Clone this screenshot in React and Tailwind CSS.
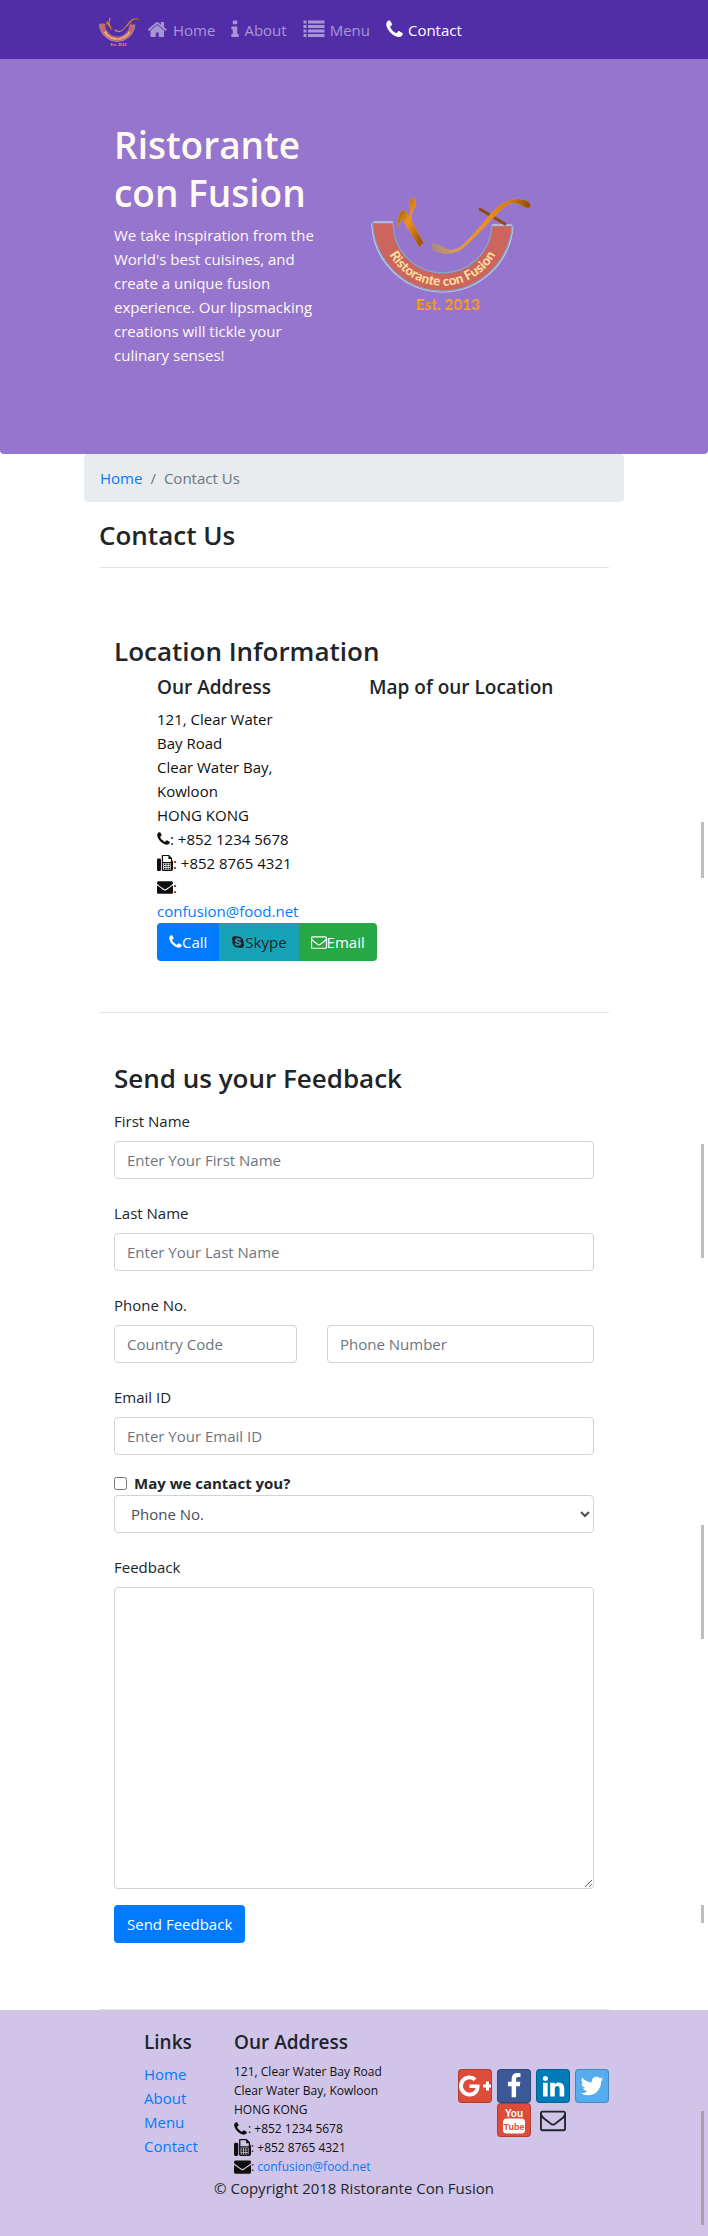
import { FaSkype } from "react-icons/fa";

const PATHS = {
  home: "M1408 992v480q0 26-19 45t-45 19h-384v-384h-256v384h-384q-26 0-45-19t-19-45v-480q0-1 .5-3t.5-3l575-474 575 474q1 2 1 6zm223-69l-62 74q-8 9-21 11h-3q-13 0-21-7l-692-577-692 577q-12 8-24 7-13-2-21-11l-62-74q-8-10-7-23.5t11-21.5l719-599q32-26 76-26t76 26l244 204v-195q0-14 9-23t23-9h192q14 0 23 9t9 23v408l219 182q10 8 11 21.5t-7 23.5z",
  info: "M1216 1344v128q0 26-19 45t-45 19h-512q-26 0-45-19t-19-45v-128q0-26 19-45t45-19h64v-384h-64q-26 0-45-19t-19-45v-128q0-26 19-45t45-19h384q26 0 45 19t19 45v576h64q26 0 45 19t19 45zm-128-1152v192q0 26-19 45t-45 19h-256q-26 0-45-19t-19-45v-192q0-26 19-45t45-19h256q26 0 45 19t19 45z",
  list: "M0 128h256v256h-256zM384 128h1408v256h-1408zM0 512h256v256h-256zM384 512h1408v256h-1408zM0 896h256v256h-256zM384 896h1408v256h-1408zM0 1280h256v256h-256zM384 1280h1408v256h-1408z",
  phone: "M1600 1240q0 27-10 70.5t-21 68.5q-21 50-122 106-94 51-186 51-27 0-52.5-3.5t-57.5-12.5-47.5-14.5-55.5-20.5-49-18q-98-35-175-83-128-79-264.5-215.5t-215.5-264.5q-48-77-83-175-3-9-18-49t-20.5-55.5-14.5-47.5-12.5-57.5-3.5-52.5q0-92 51-186 56-101 106-122 25-11 68.5-21t70.5-10q14 0 21 3 18 6 53 76 11 19 30 54t35 63.5 31 53.5q3 4 17.5 25t21.5 35.5 7 28.5q0 20-28.5 50t-62 55-62 53-28.5 46q0 9 5 22.5t8.5 20.5 14 24 11.5 19q76 137 174 235t235 174q2 1 19 11.5t24 14 20.5 8.5 22.5 5q18 0 46-28.5t53-62 55-62 50-28.5q14 0 28.5 7t35.5 21.5 25 17.5q25 15 53.5 31t63.5 35 54 30q70 35 76 53 3 7 3 21z",
  envelope: "M1792 710v794q0 66-47 113t-113 47h-1472q-66 0-113-47t-47-113v-794q44 49 101 87 362 246 497 345 57 42 92.5 65.5t94.5 48 110 24.5h2q51 0 110-24.5t94.5-48 92.5-65.5q170-123 498-345 57-39 100-87zm0-294q0 79-49 151t-122 123q-376 261-468 325-10 7-42.5 31t-54 38.5-52 32.5-57.5 27-50 9h-2q-23 0-50-9t-57.5-27-52-32.5-54-38.5-42.5-31q-91-64-262-182.5t-205-142.5q-62-42-117-115.5t-55-136.5q0-78 41.5-130t118.5-52h1472q65 0 112.5 47t47.5 113z",
  envelopeO: "M1664 1504v-768q-32 36-69 66-268 206-426 338-51 43-83 67t-86.5 48.5-102.5 24.5h-2q-48 0-102.5-24.5t-86.5-48.5-83-67q-158-132-426-338-37-30-69-66v768q0 13 9.5 22.5t22.5 9.5h1472q13 0 22.5-9.5t9.5-22.5zm0-1051v-24.5l-.5-13-3-12.5-5.5-9-9-7.5-14-2.5h-1472q-13 0-22.5 9.5t-9.5 22.5q0 168 147 284 193 152 401 317 6 5 35 29.5t46 37.5 44.5 31.5 50.5 27.5 43 9h2q20 0 43-9t50.5-27.5 44.5-31.5 46-37.5 35-29.5q208-165 401-317 54-43 100.5-115.5t46.5-131.5zm128-37v1088q0 66-47 113t-113 47h-1472q-66 0-113-47t-47-113v-1088q0-66 47-113t113-47h1472q66 0 113 47t47 113z",
  facebook: "M1343 12v264h-157q-86 0-116 36t-30 108v189h293l-39 296h-254v759h-306v-759h-255v-296h255v-218q0-186 104-288.5t277-102.5q147 0 228 12z",
  linkedin: "M477 625v991h-330v-991h330zm21-306q1 73-50.5 122t-135.5 49h-2q-82 0-132-49t-50-122q0-74 51.5-122.5t134.5-48.5 133 48.5 51 122.5zm1166 729v568h-329v-530q0-105-40.5-164.5t-126.5-59.5q-63 0-105.5 34.5t-63.5 85.5q-11 30-11 81v553h-329q2-399 2-647t-1-296l-1-48h329v144h-2q20-32 41-56t56.5-52 87-43.5 114.5-15.5q171 0 275 113.5t104 332.5z",
  twitter: "M1684 408q-67 98-162 167 1 14 1 42 0 130-38 259.5t-115.5 248.5-184.5 210.5-258 146-323 54.5q-271 0-496-145 35 4 78 4 225 0 401-138-105-2-188-64.5t-114-159.5q33 5 61 5 43 0 85-11-112-23-185.5-111.5t-73.5-205.5v-4q68 38 146 41-66-44-105-115t-39-154q0-88 44-163 121 149 294.5 238.5t371.5 99.5q-8-38-8-74 0-134 94.5-228.5t228.5-94.5q140 0 236 102 109-21 205-78-37 115-142 178 93-10 186-50z",
  google: "M1437 913q0 208-87 370.5t-248 254-369 91.5q-149 0-285-58t-234-156-156-234-58-285 58-285 156-234 234-156 285-58q286 0 491 192l-199 191q-117-113-292-113-123 0-227.5 62t-165.5 168.5-61 232.5 61 232.5 165.5 168.5 227.5 62q83 0 152.5-23t114.5-57.5 78.5-78.5 49-83 21.5-74h-416v-252h692q12 63 12 122zm867-122v210h-209v209h-210v-209h-209v-210h209v-209h210v209h209z",
};

function Icon({ name, box = "0 0 1792 1792", className }) {
  return (
    <svg viewBox={box} fill="currentColor" aria-hidden="true" className={className}>
      <path d={PATHS[name]} />
    </svg>
  );
}

function Fax({ className }) {
  return (
    <svg viewBox="0 0 16 16" aria-hidden="true" className={className}>
      <rect x="0" y="3.5" width="4" height="12.5" rx="1.3" fill="currentColor" />
      <path
        fill="currentColor"
        fillRule="evenodd"
        d="M5.6 0H12l3 3v2q1 .6 1 2v7q0 2-2 2H6q-1.2 0-1.2-1.3V.8q0-.8.8-.8zM6 1.100v5.800h7.900V4h-2.500V1.100zM6.200 8v6.700h7.500V8z"
      />
      <path
        fill="currentColor"
        d="M7 8.500h1.500V10H7zM9.300 8.500h1.500V10H9.300zM11.600 8.500h1.500V10h-1.500zM7 10.700h1.500v1.500H7zM9.300 10.700h1.500v1.500H9.300zM11.600 10.700h1.500v1.500h-1.500zM7 12.900h1.500v1.500H7zM9.300 12.900h1.500v1.500H9.300zM11.600 12.900h1.500v1.500h-1.500z"
      />
    </svg>
  );
}

function Logo({ id, className }) {
  const wood = `url(#${id}-wood)`;
  return (
    <svg viewBox="60 48 490 348" role="img" aria-label="Ristorante con Fusion logo" className={className}>
      <defs>
        <linearGradient id={`${id}-wood`} x1="0" y1="0" x2="1" y2="1">
          <stop offset="0" stopColor="#8a4a08" />
          <stop offset="0.45" stopColor="#f0901c" />
          <stop offset="1" stopColor="#8a4a08" />
        </linearGradient>
        <linearGradient id={`${id}-tail`} x1="0" y1="0" x2="1" y2="0">
          <stop offset="0" stopColor="#a08a80" />
          <stop offset="0.22" stopColor="#e09a50" />
          <stop offset="0.55" stopColor="#f28e14" />
          <stop offset="0.8" stopColor="#d07a14" />
          <stop offset="1" stopColor="#8a4a08" />
        </linearGradient>
        <linearGradient id={`${id}-gold`} x1="0" y1="0" x2="0" y2="1">
          <stop offset="0" stopColor="#ffb84a" />
          <stop offset="0.55" stopColor="#ea8c14" />
          <stop offset="1" stopColor="#ffae3a" />
        </linearGradient>
        <path id={`${id}-arc`} d="M95 135A183 183 0 0 0 461 135" />
      </defs>
      <path d="M67 131A211 213 0 0 0 488 140" fill="none" stroke="#d9d4e4" strokeWidth="7" />
      <path
        d="M67 128A211 216 0 0 0 488 137H426A148 146 0 0 1 130 129Z"
        fill="#cc655e"
        stroke="#7fa6d6"
        strokeWidth="4"
      />
      <path d="M70 126H129M427 135H486" stroke="#dfe3ee" strokeWidth="3" />
      <path
        d="M208 202L221 188 188 128C182 116 184 104 192 88 200 72 199 54 190 53 178 52 178 66 180 82 181 94 180 104 176 112 171 96 166 87 156 91 144 104 142 124 144 144 148 140 150 124 157 119Z"
        fill={wood}
        stroke="#c9a27c"
        strokeWidth="1"
      />
      <path d="M391 88L466 132" stroke="#8e4c0c" strokeWidth="9" strokeLinecap="round" />
      <path
        d="M247 192C262 186 276 206 300 210 330 212 352 182 380 152 420 108 448 56 504 57 526 57 546 66 543 78 538 90 524 82 510 74 482 60 462 82 436 108 402 142 366 186 330 212 300 228 262 220 248 208Z"
        fill={`url(#${id}-tail)`}
        stroke="#c9a27c"
        strokeWidth="1"
      />
      <text fontFamily="Lato, sans-serif" fontSize="40" fontWeight="900" fill="#fbdf9a" textAnchor="middle">
        <textPath href={`#${id}-arc`} startOffset="50%">
          Ristorante con Fusion
        </textPath>
      </text>
      <text
        x="294"
        y="390"
        fontFamily="Lato, sans-serif"
        fontSize="46"
        fontWeight="900"
        fill={`url(#${id}-gold)`}
        textAnchor="middle"
      >
        Est. 2013
      </text>
    </svg>
  );
}

const field =
  "block h-[38px] w-full rounded border border-[#ced4da] bg-white px-3 py-1 text-[#495057] placeholder:text-[#6c757d]";

function Field({ id, label, placeholder, type = "text" }) {
  return (
    <div>
      <label htmlFor={id} className="mb-2 block">
        {label}
      </label>
      <input id={id} type={type} placeholder={placeholder} className={field} />
    </div>
  );
}

const NAV = [
  { label: "Home", icon: "home", box: "64 0 1664 1792", size: "w-5 h-[21px]" },
  { label: "About", icon: "info", box: "576 0 640 1792", size: "w-2 h-[21px]" },
  { label: "Menu", icon: "list", box: "0 0 1792 1792", size: "w-[22px] h-[21px]" },
  { label: "Contact", icon: "phone", box: "192 0 1408 1792", size: "w-[17px] h-[21px]", active: true },
];

const SOCIAL = [
  { name: "facebook", label: "Facebook", bg: "bg-[#3b5998]", size: "size-[26px]" },
  { name: "linkedin", label: "LinkedIn", bg: "bg-[#007bb6]", size: "size-[25px]" },
  { name: "twitter", label: "Twitter", bg: "bg-[#55acee]", size: "size-[26px]" },
];

const social =
  "flex size-[34px] items-center justify-center overflow-hidden rounded border border-black/20 text-white";

const SCROLL_MARKS = [
  "top-[822px] h-14",
  "top-[1144px] h-[114px]",
  "top-[1525px] h-[114px]",
  "top-[1905px] h-[18px]",
  "top-[2111px] h-[114px]",
];

export default function App() {
  return (
    <div className="relative overflow-hidden bg-white font-['Open_Sans','Noto_Sans',sans-serif] text-[15px] leading-6 text-[#212529]">
      <nav className="bg-[#512da8]">
        <div className="mx-auto flex h-[59px] max-w-[540px] items-center px-[15px]">
          <a href="#" className="mr-2">
            <Logo id="brand" className="mt-1 h-[30px] w-[41px]" />
          </a>
          <ul className="flex items-center gap-4">
            {NAV.map((n) => (
              <li key={n.label}>
                <a
                  href="#"
                  className={`flex items-center gap-[5px] ${n.active ? "text-white" : "text-white/50"}`}
                >
                  <Icon name={n.icon} box={n.box} className={n.size} />
                  {n.label}
                </a>
              </li>
            ))}
          </ul>
        </div>
      </nav>

      <header className="rounded-b bg-[#9575cd] pt-[62px] pb-[87px] text-[#fffaf0]">
        <div className="mx-auto grid max-w-[540px] grid-cols-2 items-center gap-[30px] px-[30px]">
          <div>
            <h1 className="mb-[6px] text-[37px] leading-[48px] font-semibold">Ristorante con Fusion</h1>
            <p>
              We take inspiration from the World's best cuisines, and create a unique fusion
              experience. Our lipsmacking creations will tickle your culinary senses!
            </p>
          </div>
          <Logo id="hero" className="mt-5 ml-px w-[163px]" />
        </div>
      </header>

      <main className="mx-auto max-w-[540px]">
        <ol className="mb-4 flex h-12 items-center gap-2 rounded bg-[#e9ecef] px-4">
          <li>
            <a href="#" className="text-[#007bff]">
              Home
            </a>
          </li>
          <li className="text-[#6c757d]">/</li>
          <li className="text-[#6c757d]">Contact Us</li>
        </ol>

        <div className="px-[15px]">
          <h2 className="text-[26px] leading-[34px] font-semibold">Contact Us</h2>
          <hr className="mt-[15px] border-black/10" />

          <section className="px-[15px] pt-[66px] pb-[51px]">
            <h2 className="mb-[7px] text-[26px] leading-[34px] font-semibold">Location Information</h2>
            <div className="grid grid-cols-2 gap-[30px]">
              <div className="pl-[43px]">
                <h3 className="mb-2 text-[19px] leading-6 font-semibold">Our Address</h3>
                <address className="max-w-[150px] text-[#0f0f0f] not-italic">
                  121, Clear Water
                  <br />
                  Bay Road
                  <br />
                  Clear Water Bay,
                  <br />
                  Kowloon
                  <br />
                  HONG KONG
                  <br />
                  <span className="flex items-center">
                    <Icon name="phone" box="192 0 1408 1792" className="h-4 w-[13px]" />: +852 1234 5678
                  </span>
                  <span className="flex items-center">
                    <Fax className="size-4" />: +852 8765 4321
                  </span>
                  <span className="flex items-center">
                    <Icon name="envelope" className="size-4" />:
                  </span>
                  <a href="mailto:confusion@food.net" className="text-[#007bff]">
                    confusion@food.net
                  </a>
                </address>
              </div>
              <h3 className="text-[19px] leading-6 font-semibold whitespace-nowrap">Map of our Location</h3>
            </div>
            <div className="ml-[43px] flex h-[38px] w-fit overflow-hidden rounded">
              <a href="tel:+85212345678" className="flex items-center bg-[#007bff] px-3 text-white">
                <Icon name="phone" box="192 0 1408 1792" className="h-4 w-[13px]" />
                Call
              </a>
              <a href="#" className="flex items-center bg-[#17a2b8] px-3">
                <FaSkype className="size-[14px]" />
                Skype
              </a>
              <a
                href="mailto:confusion@food.net"
                className="flex items-center bg-[#28a745] px-3 text-white"
              >
                <Icon name="envelopeO" className="size-4" />
                Email
              </a>
            </div>
          </section>

          <hr className="border-black/10" />

          <section className="px-[15px] pt-12 pb-[66px]">
            <h2 className="mb-[14px] text-[26px] leading-[34px] font-semibold">Send us your Feedback</h2>
            <form className="flex flex-col gap-[22px]">
              <Field id="first" label="First Name" placeholder="Enter Your First Name" />
              <Field id="last" label="Last Name" placeholder="Enter Your Last Name" />
              <div>
                <label htmlFor="area" className="mb-2 block">
                  Phone No.
                </label>
                <div className="flex gap-[30px]">
                  <input id="area" type="tel" placeholder="Country Code" className={`${field} basis-[183px]`} />
                  <input
                    type="tel"
                    aria-label="Phone Number"
                    placeholder="Phone Number"
                    className={`${field} basis-[267px]`}
                  />
                </div>
              </div>
              <Field id="email" type="email" label="Email ID" placeholder="Enter Your Email ID" />
              <div className="-mt-[6px]">
                <div className="flex items-center gap-[7px]">
                  <input id="agree" type="checkbox" className="size-[13px]" />
                  <label htmlFor="agree" className="font-bold">
                    May we cantact you?
                  </label>
                </div>
                <select aria-label="Contact method" className={field}>
                  <option>Phone No.</option>
                  <option>Email</option>
                </select>
              </div>
              <div>
                <label htmlFor="feedback" className="mb-2 block">
                  Feedback
                </label>
                <textarea id="feedback" rows={12} className={`${field} h-[302px]`} />
              </div>
              <button
                type="button"
                className="-mt-[6px] h-[38px] self-start rounded bg-[#007bff] px-[13px] text-white"
              >
                Send Feedback
              </button>
            </form>
          </section>
          <hr className="border-black/10" />
        </div>
      </main>

      <footer className="bg-[#d1c4e9] pt-5 pb-9">
        <div className="mx-auto flex max-w-[540px] pr-[15px] pl-[60px]">
          <div className="w-[90px]">
            <h3 className="mb-2 text-[19px] leading-6 font-semibold">Links</h3>
            <ul className="text-[#007bff]">
              {NAV.map((n) => (
                <li key={n.label}>
                  <a href="#">{n.label}</a>
                </li>
              ))}
            </ul>
          </div>
          <div className="flex-1">
            <h3 className="mb-2 text-[19px] leading-6 font-semibold">Our Address</h3>
            <address className="text-xs leading-[19px] text-[#0f0f0f] not-italic">
              121, Clear Water Bay Road
              <br />
              Clear Water Bay, Kowloon
              <br />
              HONG KONG
              <br />
              <span className="flex items-center">
                <Icon name="phone" box="192 0 1408 1792" className="mr-px h-4 w-[13px]" />: +852 1234 5678
              </span>
              <span className="flex items-center">
                <Fax className="size-[17px]" />: +852 8765 4321
              </span>
              <span className="flex items-center whitespace-pre">
                <Icon name="envelope" className="size-[17px]" />:{" "}
                <a href="mailto:confusion@food.net" className="text-[#007bff]">
                  confusion@food.net
                </a>
              </span>
            </address>
          </div>
          <div className="mt-[39px] flex w-[151px] flex-wrap content-start justify-center gap-x-[5px]">
            <a href="#" aria-label="Google Plus" className={`${social} bg-[#dd4b39]`}>
              <Icon name="google" box="0 0 2304 1792" className="h-[26px] w-[33px] shrink-0" />
            </a>
            {SOCIAL.map((s) => (
              <a key={s.name} href="#" aria-label={s.label} className={`${social} ${s.bg}`}>
                <Icon name={s.name} className={s.size} />
              </a>
            ))}
            <a href="#" aria-label="YouTube" className={`${social} bg-[#dd4b39]`}>
              <svg viewBox="0 0 32 32" className="size-8 shrink-0" aria-hidden="true">
                <text
                  x="16"
                  y="13"
                  textAnchor="middle"
                  fontFamily="'Liberation Sans Narrow', 'Liberation Sans', sans-serif"
                  fontWeight="700"
                  fontSize="10"
                  fill="#fff"
                >
                  You
                </text>
                <rect x="5" y="14.500" width="22" height="15" rx="3.500" fill="#fff" />
                <text
                  x="16"
                  y="26"
                  textAnchor="middle"
                  fontFamily="'Liberation Sans Narrow', 'Liberation Sans', sans-serif"
                  fontWeight="700"
                  fontSize="9"
                  fill="#dd4b39"
                >
                  Tube
                </text>
              </svg>
            </a>
            <a
              href="mailto:confusion@food.net"
              aria-label="Email"
              className="flex size-[34px] items-center justify-center"
            >
              <Icon name="envelopeO" className="size-[26px]" />
            </a>
          </div>
        </div>
        <p className="text-center">© Copyright 2018 Ristorante Con Fusion</p>
      </footer>

      {SCROLL_MARKS.map((m) => (
        <div key={m} className={`absolute right-1 w-[3px] bg-[#7d7d7d]/50 ${m}`} />
      ))}
    </div>
  );
}
